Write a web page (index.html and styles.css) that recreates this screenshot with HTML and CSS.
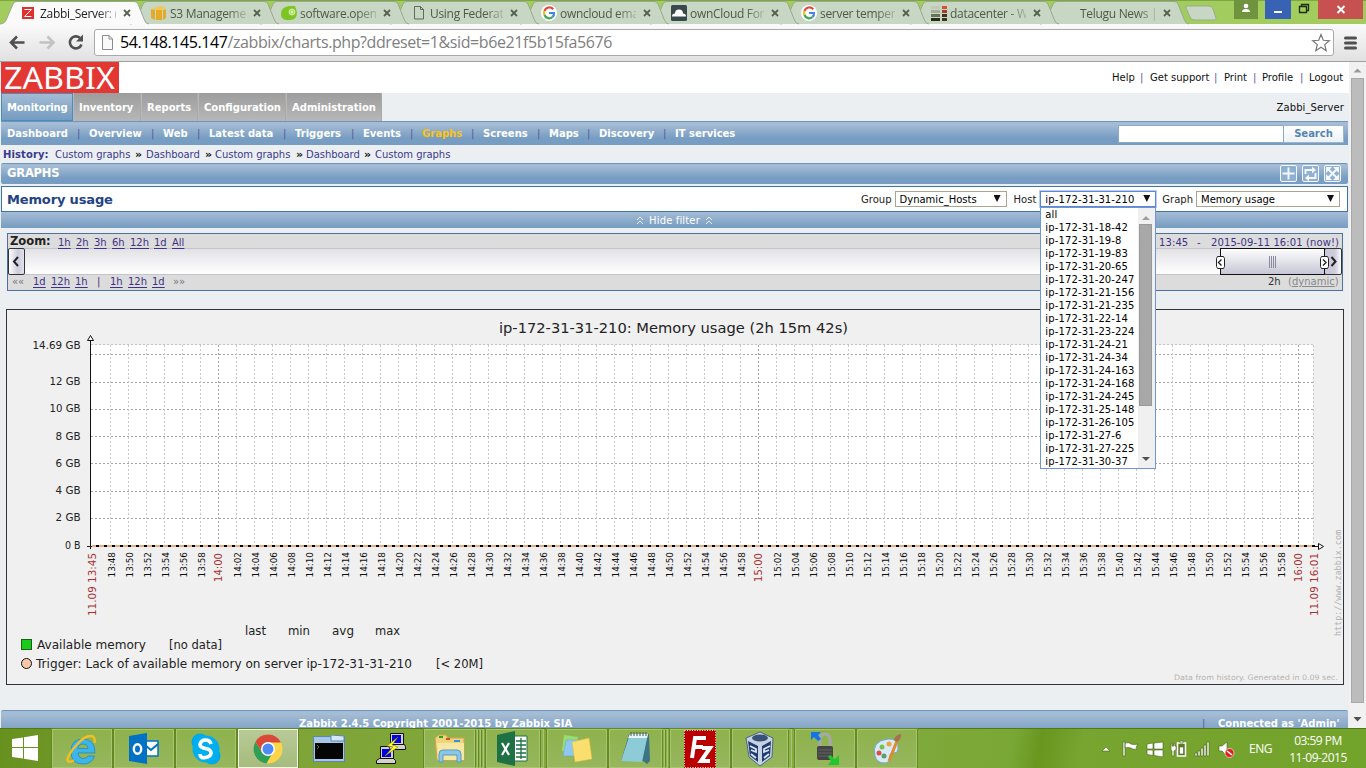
FILE: index.html
```html
<!DOCTYPE html>
<html lang="en">
<head>
<meta charset="utf-8">
<title>Zabbi_Server: Custom graphs</title>
<link rel="stylesheet" href="styles.css">
</head>
<body>
<div class="screen">
  <header class="tabstrip">
    <div class="tabs" id="tabs"></div>
    <svg class="newtab" width="34" height="24"><path d="M3 6H25Q28 6 29 9L32 18Q33 20 30 20H10Q7 20 6 17L2 8Q1 6 3 6Z" fill="#c8d7c3" stroke="#98ad86"/></svg>
    <div class="winbtns">
      <span class="wb user"><svg width="24" height="19"><circle cx="12" cy="6" r="2.3" fill="#fff"/><path d="M8 12Q8 9 12 9T16 12Z" fill="#fff"/></svg></span>
      <span class="wb min"><svg width="26" height="19"><path d="M9 11h8v2H9z" fill="#fff"/></svg></span>
      <span class="wb restore"><svg width="26" height="19"><path d="M8.500 6.500h7v6h-7zM10.500 6V4.500h7v6H16" fill="none" stroke="#1f2b0b" stroke-width="1.300"/></svg></span>
      <span class="wb close"><svg width="45" height="19"><path d="M19.500 6l7 7M26.500 6l-7 7" stroke="#fff" stroke-width="2"/></svg></span>
    </div>
  </header>

  <div class="toolbar">
    <svg class="nav" width="94" height="37" fill="none">
      <path d="M24.500 18.500H12M17 12.500l-6 6 6 6" stroke="#505050" stroke-width="2.600"/>
      <path d="M39.500 18.500H52M47.500 12.500l6 6-6 6" stroke="#c2c2c2" stroke-width="2.600"/>
      <path d="M80 14A6 6 0 1 0 81.500 20.500" stroke="#505050" stroke-width="2.600"/><path d="M83 10.500v7h-7z" fill="#505050"/>
    </svg>
    <div class="omnibox">
      <svg width="13" height="17" fill="#fafafa" stroke="#8c8c8c"><path d="M1.500 1.500H8L11.500 5V15.500H1.500zM8 1.500V5H11.500"/></svg>
      <span class="url"><b>54.148.145.147</b>/zabbix/charts.php?ddreset=1&amp;sid=b6e21f5b15fa5676</span>
      <svg class="star" width="20" height="20"><path d="M10 1.500L12.300 7.300 18.300 7.700 13.700 11.600 15.200 17.700 10 14.300 4.800 17.700 6.300 11.600 1.700 7.700 7.700 7.300Z" fill="#fff" stroke="#777" stroke-width="1.200"/></svg>
    </div>
    <svg class="burger" width="13" height="14"><path d="M1.500 2h10M1.500 7h10M1.500 12h10" stroke="#505050" stroke-width="3" stroke-linecap="round"/></svg>
  </div>

  <div class="viewport">
    <main class="page">
      <div class="brandrow">
        <svg class="logo" width="118" height="31"><rect width="118" height="31" fill="#e33734"/><text x="3" y="26.500" textLength="111" lengthAdjust="spacingAndGlyphs">ZABBIX</text></svg>
        <div class="toplinks"><span>Help</span><i>|</i><span>Get support</span><i>|</i><span>Print</span><i>|</i><span>Profile</span><i>|</i><span>Logout</span></div>
      </div>
      <div class="mainmenu">
        <span class="on">Monitoring</span><span>Inventory</span><span>Reports</span><span>Configuration</span><span>Administration</span>
        <em>Zabbi_Server</em>
      </div>
      <div class="submenu bar">
        <nav><b>Dashboard</b><i>|</i><b>Overview</b><i>|</i><b>Web</b><i>|</i><b>Latest data</b><i>|</i><b>Triggers</b><i>|</i><b>Events</b><i>|</i><b class="cur">Graphs</b><i>|</i><b>Screens</b><i>|</i><b>Maps</b><i>|</i><b>Discovery</b><i>|</i><b>IT services</b></nav>
        <div class="search"><span></span><button>Search</button></div>
      </div>
      <div class="history"><b>History:</b><a>Custom graphs</a><s>»</s><a>Dashboard</a><s>»</s><a>Custom graphs</a><s>»</s><a>Dashboard</a><s>»</s><a>Custom graphs</a></div>
      <div class="titlebar bar">
        <b>GRAPHS</b>
        <svg width="64" height="20" fill="none" stroke="#f4f8fb">
          <g fill="#8fb0d0"><rect x="1.500" y="1.500" width="16" height="16" rx="1.500"/><rect x="23.500" y="1.500" width="16" height="16" rx="1.500"/><rect x="45.500" y="1.500" width="16" height="16" rx="1.500"/></g>
          <path d="M9.500 3.500v12M3.500 9.500h12" stroke-width="2"/>
          <path d="M26.500 10V6H34M36.500 9v5H29" stroke-width="2"/><path d="M33 2.500v7l4-3.500zM30 10.500v7l-4-3.500z" fill="#f4f8fb" stroke="none"/>
          <path d="M49 5l9 9M58 5l-9 9" stroke-width="2"/><path d="M47 3h6l-6 6zM60 3v6l-6-6zM47 16v-6l6 6zM60 16h-6l6-6z" fill="#f4f8fb" stroke="none"/>
        </svg>
      </div>
      <div class="selectrow">
        <h1>Memory usage</h1>
        <label class="grl">Group</label><div class="select grp">Dynamic_Hosts<u></u></div>
        <label class="hl">Host</label>
        <div class="select host">ip-172-31-31-210<u></u>
          <div class="options"><div class="list" id="hosts"></div>
            <div class="optscroll"><svg width="16" height="260"><path d="M4 12l4-4 4 4z" fill="#a0a0a0"/><rect x="1.500" y="16.500" width="12" height="181" fill="#a8a8a8" stroke="#999"/><path d="M4 249h8l-4 4z" fill="#505050"/></svg></div>
          </div>
        </div>
        <label class="gl">Graph</label><div class="select gr">Memory usage<u></u></div>
      </div>
      <div class="filterbar"><svg width="8" height="9"><path d="M1 4l3-3 3 3M1 8l3-3 3 3" fill="none" stroke="#e8eff6"/></svg><span>Hide filter</span><svg width="8" height="9"><path d="M1 4l3-3 3 3M1 8l3-3 3 3" fill="none" stroke="#e8eff6"/></svg></div>

      <div class="timeline">
        <div class="trow up"><b>Zoom:</b><a>1h</a><a>2h</a><a>3h</a><a>6h</a><a>12h</a><a>1d</a><a>All</a><div class="range"><span>13:45</span><span>-</span><span>2015-09-11 16:01 (now!)</span></div></div>
        <div class="track">
          <svg width="17" height="27"><defs><linearGradient id="g1"><stop offset="0" stop-color="#fff"/><stop offset=".6" stop-color="#ccccdc"/><stop offset="1" stop-color="#e4e4ee"/></linearGradient><linearGradient id="g3"><stop offset="0" stop-color="#c8c8da"/><stop offset=".6" stop-color="#ccccdc"/><stop offset="1" stop-color="#fff"/></linearGradient><linearGradient id="g2" x2="0" y2="1"><stop offset="0" stop-color="#fff"/><stop offset="1" stop-color="#c5c5d5"/></linearGradient></defs><rect x=".5" y=".5" width="16" height="26" rx="1.500" fill="url(#g1)" stroke="#333"/><path d="M10 9l-4 4.500 4 4.500" fill="none" stroke="#222" stroke-width="2"/></svg>
          <svg width="126" height="27"><rect x="108.500" y=".5" width="17" height="26" rx="1.500" fill="url(#g3)" stroke="#333"/><path d="M115.500 9l4 4.500-4 4.500" fill="none" stroke="#222" stroke-width="2"/><rect x="4.500" y=".5" width="104" height="26" fill="url(#g2)" stroke="#111"/><path d="M53.500 8v12M55.500 8v12M57.500 8v12M59.500 8v12" stroke="#8a8a9c"/><g fill="#fff" stroke="#222"><path d="M1.500 8.500h6l1 2v8l-1 2h-6l-1-2v-8z"/><path d="M105.500 8.500h6l1 2v8l-1 2h-6l-1-2v-8z"/></g><path d="M5.500 11.500l-3 3 3 3M107 11.500l3 3-3 3" fill="none" stroke="#222" stroke-width="1.400"/></svg>
        </div>
        <div class="trow down"><s>««</s><a>1d</a><a>12h</a><a>1h</a><i>|</i><a>1h</a><a>12h</a><a>1d</a><s>»»</s><div class="period"><span>2h</span><span>(<u>dynamic</u>)</span></div></div>
      </div>

      <svg class="chart" id="chart" width="1338" height="376" viewBox="6 309 1338 376"></svg>

      <footer class="bar foot"><b>Zabbix 2.4.5 Copyright 2001-2015 by Zabbix SIA</b><i>|</i><b class="conn">Connected as 'Admin'</b></footer>
    </main>
    <aside class="pagescroll"><svg width="17" height="667"><path d="M4.500 10.500l4-4 4 4z" fill="#999"/><rect x="2.500" y="16.500" width="12" height="624" fill="#bcbcbc" stroke="#a8a8a8"/><path d="M4.500 655h8l-4 4.500z" fill="#505050"/></svg></aside>
  </div>

  <footer class="taskbar">
    <svg class="winlogo" width="27" height="27" fill="#fff"><path d="M0 4l11-1.500V12H0zM12 2.300L26 0v12H12zM0 13h11v10.500L0 22zM12 13h14v13l-14-2.200z"/></svg>
    <div class="app a1"><svg width="32" height="32"><path fill-rule="evenodd" d="M29 20H12q1 5.500 5.500 5.500 3 0 4.500-2.500h6.500Q26 31 17 31 5 31 5 18.500 5 6 17 6q12 0 12 14zM12 15.500h10q-.5-4.500-5-4.500t-5 4.500z" fill="#3cb5ea" stroke="#1c83c0" stroke-width=".7"/><path d="M28.500 10q1-7-4-7-6 0-13 8Q3 20 1.500 26q-.5 4.500 6.500 1.500" fill="none" stroke="#f5bf20" stroke-width="2.400"/></svg></div>
    <div class="app a2"><svg width="32" height="32"><path d="M15 8h15v15H15z" fill="#fff" stroke="#0071c5" stroke-width="1.500"/><path d="M17 12l6 5 7-6" fill="none" stroke="#0071c5" stroke-width="2"/><path d="M1 3l18-3v31L1 28z" fill="#0071c5"/><ellipse cx="9.500" cy="16" rx="3.700" ry="4.700" fill="none" stroke="#fff" stroke-width="2.400"/></svg></div>
    <div class="app a3"><svg width="32" height="32"><circle cx="10" cy="9" r="8.500" fill="#00a9e8"/><circle cx="22" cy="23" r="8.500" fill="#00a9e8"/><circle cx="16" cy="16" r="13.500" fill="#00aff0"/><path d="M21 11q-1-4-5.500-4T10 11.500q0 3 5.500 4t5.500 4.500-5.500 4.500T10 21" fill="none" stroke="#fff" stroke-width="3.600"/></svg></div>
    <div class="app a4"><svg width="32" height="32"><circle cx="16" cy="16" r="14.500" fill="#fcd54a"/><path d="M3.500 8.700A14.500 14.500 0 0 0 14.500 30.500L21 19H10z" fill="#2f9e58"/><path d="M3.500 8.700A14.500 14.500 0 0 1 29 9.500H15L10 19z" fill="#d9493a"/><circle cx="16" cy="16" r="7" fill="#fff"/><circle cx="16" cy="16" r="5.500" fill="#4c8bf5"/></svg></div>
    <div class="icon cmd"><svg width="32" height="27"><rect x=".5" y="1.500" width="31" height="25" fill="#a6c7e8" stroke="#5c86ad"/><path d="M18 0v6h13V1z" fill="#d5e8fa" stroke="#5c86ad"/><path d="M2 8h28v16H2z" fill="#050505"/><path d="M4 10l2 2-2 2" fill="none" stroke="#3b7a3b"/></svg></div>
    <div class="icon putty"><svg width="33" height="33" stroke="#111"><path d="M15.500 1.500h13v11h-13zM13.500 14.500l3-2h13l1 2v3h-15zM5.500 14.500h13v12h-13zM1.500 28.500l3-2h14l2 2v3h-19z" fill="#d5d2ca"/><path d="M17 3h9v8h-9zM7 17h9v8H7z" fill="#0000e0" stroke="none"/><path d="M23 5L12 14l6 1-8 9 13-9-6-2z" fill="#ffff30" stroke="#8a8500" stroke-width=".6"/></svg></div>
    <div class="app a5"><svg width="32" height="32"><path d="M1 5l4-3h7l2 3h16v22H3z" fill="#efd47a" stroke="#c9a748"/><path d="M3 10h27v17H4z" fill="#f8e6a3"/><path d="M5 4h4" stroke="#29a329" stroke-width="2"/><path d="M12 6h4" stroke="#db4830" stroke-width="2"/><path d="M20 8h6" stroke="#3b8ee0" stroke-width="2"/><path d="M5 29v-8q0-4 4-4h14q4 0 4 4v8h-4v-7H9v7z" fill="#8bc6e6" stroke="#579cc4"/></svg></div><i class="stack s2"></i><i class="stack s2"></i><i class="stack s2"></i>
    <div class="app a6"><svg width="32" height="36"><path d="M17 5h13v25H17z" fill="#fff" stroke="#1e7145"/><path d="M19 10h10M19 14h10M19 18h10M19 22h10M19 26h10M24 7v21" stroke="#1e7145" stroke-width="1.300"/><path d="M0 4l18-4v35L0 31z" fill="#1e7145"/><path d="M5 12l7 12M12 12l-7 12" stroke="#fff" stroke-width="2.200"/></svg></div><i class="stack s1"></i>
    <div class="app a7"><svg width="32" height="30"><path d="M3 1l14 2-3 17L1 17z" fill="#9bdc72"/><path d="M5 6h15v16H2z" fill="#8fc8ee" stroke="#64a4cc" stroke-width=".5"/><path d="M11 8l17-4 3 21-17 3z" fill="#fbdf6e" stroke="#dfb936" stroke-width=".5"/></svg></div>
    <div class="app a8"><svg width="30" height="35"><path d="M8 3h20l1 27-3 3-4-3H0z" fill="#3d7482"/><path d="M9 3h18l-6 28L0 30z" fill="#8dcbd7"/><path d="M9 3h18l-1 4H7z" fill="#e8f3f4"/><path d="M10 1v4M13 1v4M16 1v4M19 1v4M22 1v4M25 1v4" stroke="#456"/></svg></div><i class="stack s2"></i><i class="stack s2"></i>
    <div class="app a9"><svg width="32" height="38"><rect width="32" height="38" fill="#b90000"/><rect x=".5" y=".5" width="31" height="37" fill="none" stroke="#fff" stroke-dasharray="1 1.500"/><path d="M8 28L11 8H22M10 17h9M18 18h8L17 31h9" fill="none" stroke="#fff" stroke-width="4"/></svg></div>
    <div class="app a10"><svg width="30" height="36"><path d="M15 1l13 6-1 19-12 9L4 26 1 7z" fill="#c6d3e2" stroke="#50647f"/><path d="M3 10l10 5v16L5 25zM17 15l9-5-1 15-8 6z" fill="#213d70"/><path d="M5 15l6 3v3l-5-2M6 23l5 4M25 15l-6 3v3l5-2M24 23l-5 4" fill="none" stroke="#dbe8f6" stroke-width="1.800"/><ellipse cx="15" cy="7" rx="8" ry="3.500" fill="#395177"/></svg></div><i class="stack s1"></i>
    <div class="app a11"><svg width="32" height="38"><path d="M11 17V10q0-6 5-6t5 6v7" fill="none" stroke="#a8a8a8" stroke-width="3"/><rect x="8" y="16" width="16" height="14" rx="2" fill="#444"/><path d="M9 20h14M9 23h14M9 26h14" stroke="#626262"/><path d="M2 2h10l-3 3 3 4-3 2-4-4-3 3z" fill="#1473e8"/><path d="M30 35H19l3-4-3-4 2-2 5 4 4-4z" fill="#22c52b"/></svg></div>
    <div class="app a12"><svg width="34" height="36"><path d="M5 25Q1 10 18 8q11-1 10 10 0 4-4 4-5-1-4 5 0 5-6 5Q7 32 5 25z" fill="#d6ebf7" stroke="#6da7cf"/><circle cx="9" cy="22" r="2.500" fill="#e34a42"/><circle cx="12" cy="16" r="2.500" fill="#7bc149"/><circle cx="19" cy="13" r="2.500" fill="#f0a23b"/><circle cx="14" cy="25" r="2.500" fill="#5f9c68"/><path d="M27 10L19 30" stroke="#e18a2b" stroke-width="3"/><path d="M24 9q1-5 7-6 1 4-4 8z" fill="#a86f4e"/></svg></div>
    <div class="tray">
      <svg width="140" height="24" fill="#fff" stroke="#46631a" stroke-width=".6"><path d="M4 14l4-4 4 4z"/><path d="M25 5v14h2V5zM27 6q4-1 6 1 3 1 7 0l-2 3 1 2q-4 1-6-1-3-1-6 0z"/><path d="M49 7l6-1v6h-6zM56 6l9-1v7h-9zM49 13h6v5.500l-6-1zM56 13h9v7l-9-1.500z"/><path d="M79.500 6h8v13h-8z" fill="#5d7c27" stroke="#fff" stroke-width="1.500"/><path d="M82 4h3v2h-3zM81.500 10h4v7h-4zM73 6h1v3h2V6h1v3h1v4l-2 1v5h-2v-5l-1-1V9z"/><path d="M97 16h2v3h-2zM100 14h2v5h-2zM103 11h2v8h-2zM106 8h2v11h-2zM109 5h2v14h-2z"/><path d="M121 9h3l5-4v14l-5-5h-3z"/><circle cx="131.500" cy="16" r="4.500" fill="#e32020" stroke="#fff"/><path d="M129 14l5 4" stroke="#fff" stroke-width="1.600"/></svg>
      <span class="lang">ENG</span>
      <span class="clock"><span>03:59 PM</span><span>11-09-2015</span></span>
    </div>
  </footer>
</div>
<script src="script.js"></script>
</body>
</html>
```
FILE: styles.css
```css
*{box-sizing:border-box}
body{margin:0;overflow:hidden;font-family:"DejaVu Sans",sans-serif;font-size:10px;color:#111}
i,em{font-style:normal}s{text-decoration:none}
svg{display:block;flex:none}
.screen{width:1366px;height:768px;display:flex;flex-direction:column}
.tabstrip{height:24px;flex:none;background:linear-gradient(#7ea744 0 1px,#a2cc5e 1px);display:flex;position:relative}
.tabs{display:flex;width:1184px}
.tab{width:130px;height:24px;flex:none;position:relative;font:12px "Open Sans",sans-serif;color:#4d5a47}
.tab>.shape{position:absolute;left:0;top:0;overflow:visible}
.tabin{position:relative;display:flex;align-items:center;padding-left:21px;height:26px}
.tab .label{width:79px;padding-left:3px;white-space:nowrap;letter-spacing:-.3px;-webkit-mask:linear-gradient(90deg,#000 76%,rgba(0,0,0,.25))}
.tab.active{color:#222}
.tab .x{margin-left:3px}
.winbtns{display:flex;margin-left:16px}
.wb{height:19px}.user{width:24px;background:#709340;margin-right:7px}.min{width:26px;background:#3863b4}.restore{width:27px}.close{width:45px;background:#c75050}
.toolbar{height:38px;flex:none;background:linear-gradient(#fafafa,#e1e1e1);border-bottom:1px solid #a0a0a0;display:flex;align-items:center}
.omnibox{width:1240px;height:27px;border:1px solid #a9a9a9;border-radius:3px;background:#fff;display:flex;align-items:center;padding:0 2px 0 6px}
.url{font:16px/24px "Open Sans",sans-serif;color:#808080;margin:-1px 0 0 6px;letter-spacing:-.41px;white-space:nowrap}
.url b{font-weight:400;color:#000}
.star{margin-left:auto}.burger{margin-left:10px}
.viewport{height:666px;flex:none;display:flex;overflow:hidden;background:#ebeff2}
.page{width:1349px;display:flex;flex-direction:column;padding-left:1px}
.pagescroll{width:17px;background:#f1f1f1}
.brandrow{height:31px;flex:none;background:#fff;display:flex;justify-content:space-between;align-items:center}
.logo text{font:30px "Noto Sans",sans-serif;fill:#fff}
.toplinks{display:grid;grid-template-columns:28px 10px 64px 10px 29px 9px 38px 9px 35px;padding-right:5px;white-space:nowrap}
.toplinks i,.submenu i,.foot i{color:#555a9c}
.mainmenu{height:28px;flex:none;display:flex;font-weight:700;color:#fff}
.mainmenu span{height:28px;background:linear-gradient(#9d9d9d,#b7b7b7);border-right:1px solid #a9a9a9;border-left:1px solid #b8b8b8;line-height:29px;padding-left:5px;width:57px;white-space:nowrap}
.mainmenu span:nth-child(2){width:68px}.mainmenu span:nth-child(4){width:88px}.mainmenu span:nth-child(5){width:96px}
.mainmenu .on{width:72px;background:linear-gradient(#a2bbd5,#759cc1);border:1px solid #4a8abc;padding-left:5px;line-height:27px;letter-spacing:-.1px}
.mainmenu em{margin-left:auto;padding-right:5px;color:#111;font-weight:400;line-height:29px;letter-spacing:.1px}
.bar{background:linear-gradient(#a5bcd5 10%,#779dc2 70%);border-top:1px solid #6d96bb;color:#fff}
.submenu{height:24px;flex:none;width:1347px;display:flex;justify-content:space-between;line-height:23px}
.submenu nav{display:grid;grid-template-columns:70px 12px 62px 12px 34px 12px 74px 12px 56px 12px 47px 12px 49px 12px 54px 12px 38px 12px 64px 12px 70px;padding-left:6px;white-space:nowrap}
.submenu .cur{color:#ffc20c}
.search{display:flex;padding:3px 4px 0 0}
.search span{width:166px;height:18px;background:#fff;border:1px solid #8baaca}
.search button{width:60px;height:18px;border:1px solid #9cb5d0;border-left:0;background:linear-gradient(#fff,#edf2f7);font:bold 10px/14px "DejaVu Sans";color:#5584b2;padding:0}
.history{height:18px;flex:none;display:grid;grid-template-columns:52px 79px 12px 58px 11px 80px 11px 57px 12px 80px;line-height:19px;padding-left:2px;color:#3a3a8c;white-space:nowrap;letter-spacing:-.05px}
.history s{color:#111;font-size:11px;font-weight:700;padding-left:1px}
.history b{letter-spacing:.1px}
.titlebar{height:21px;flex:none;width:1347px;display:flex;justify-content:space-between;padding-left:6px;line-height:19px;font-size:11.500px;border-radius:2px;padding-right:5px;letter-spacing:-.2px}
.selectrow{height:26px;flex:none;width:1347px;margin-top:2px;border:1px solid #3d73a5;background:#fff;display:flex;align-items:center;padding-right:7px;position:relative}
h1{font-size:13px;color:#244385;margin:0 auto 0 5px;letter-spacing:-.15px}
label{margin-right:4px;color:#222}.grl{margin-right:3px}.hl{margin-left:7px}.gl{margin-left:6px;margin-right:3px}
.select{height:16px;border:1px solid #aaa590;line-height:15px;padding-left:4px;display:flex;justify-content:space-between;white-space:nowrap;position:relative;background:#fff;color:#000}
.select>u{width:7px;height:7px;background:#111;clip-path:polygon(0 0,100% 0,50% 100%);margin:3px 5px 0 0}
.grp{width:112px}.host{width:116px;border-color:#5b87d8;outline:1px solid #b8cdf2;letter-spacing:.13px}.gr{width:144px}
.options{position:absolute;left:-1px;top:15px;width:116px;height:262px;border:1px solid #7195d0;background:#fff;display:flex;z-index:5;line-height:13px}
.list{width:97px;padding-left:4px}
.list div{height:13px}
.optscroll{width:17px;background:#f0f0f0}
.filterbar{height:16px;flex:none;width:1347px;background:linear-gradient(#a5bcd5,#769cc1);color:#fff;display:flex;justify-content:center;align-items:center;gap:5px}
.filterbar span{letter-spacing:.15px}
.timeline{height:58px;flex:none;width:1336px;margin:5px 0 0 6px;border:1px solid #4d70ab;background:#dcdcdc;color:#3e3286}
.trow{display:grid;position:relative;white-space:nowrap}
.trow a{text-decoration:underline;text-underline-offset:2px}
.up{height:14px;line-height:17px;grid-template-columns:48px 18px 18px 18px 18px 24px 18px 20px 1fr;padding-left:2px}
.up b{font-size:11.500px;color:#222;line-height:15px}
.down{height:15px;line-height:13px;grid-template-columns:21px 18px 24px 22px 13px 18px 24px 21px 20px 1fr;padding-left:4px}
.down s{color:#777}
.range,.period{justify-self:end;display:grid}
.range{grid-template-columns:38px 14px 129px;padding-right:2px;letter-spacing:.1px;line-height:18px}
.period{grid-template-columns:20px 52px;padding-right:2px;color:#333;line-height:14px}
.period span:last-child{color:#888}
.track{height:27px;display:flex;justify-content:space-between;background:linear-gradient(#c4c4cc 0 1px,#e2e2e6 1px,#fff 26px,#c4c4cc 26px)}
.chart{margin:18px 0 0 5px}
.chart text{fill:#222;font-size:10.500px}
.foot{height:32px;flex:none;width:1347px;margin-top:25px;display:flex;line-height:26px;padding-left:298px;border-radius:2px}
.foot i{margin-left:auto;width:16px}.conn{width:130px;white-space:nowrap}
.taskbar{height:40px;flex:none;background:linear-gradient(100deg,#67911f 0,#7da337 15%,#86ab40 60%,#79a735 74%,#68961e 76%,#78a430 79%,#72a32b 100%);border-top:1px solid #517717;display:flex;align-items:center;color:#fff}
.winlogo{margin:0 13px 0 12px}
.app{width:60px;height:39px;border:1px solid #a9c572;outline:1px solid #638924;outline-offset:0;background:linear-gradient(#8eb24d,#97b65d);display:flex;align-items:center;justify-content:center;margin-right:2px;flex:none}
.a4{background:linear-gradient(#b8ca98,#a5bb7b);border-color:#f0f5e7}
.icon{width:32px;flex:none}.cmd{margin:0 30px 0 13px}.putty{margin-right:17px}
.a5{width:51px;margin-right:0}.app.a6{width:54px;margin-right:0}.a8{width:53px;margin-right:0}.a10{width:56px;margin-right:0}
.stack{height:39px;border:1px solid #a9c572;border-left:1px solid #638924;background:#8eb24d;flex:none}
.s1{width:4px;margin-right:3px}.s2{width:3px}.s2+.app{margin-left:2px}
.tray{margin-left:auto;display:flex;align-items:center;width:268px;font:12px "Open Sans",sans-serif;letter-spacing:-.5px}
.lang{width:24px;margin-left:11px}.clock{margin-left:14px;width:62px;text-align:center;display:flex;flex-direction:column;line-height:17px;white-space:nowrap}
```
FILE: script.js
```js
// Browser tabs
var G = '<circle cx="8" cy="8" r="8" fill="#fff"/><g fill="none" stroke-width="2.2"><path d="M12.200 4.300A5 5 0 0 0 3.500 6" stroke="#e04a3c"/><path d="M3.500 6a5 5 0 0 0 0 4" stroke="#f3b920"/><path d="M3.500 10a5 5 0 0 0 8 2" stroke="#3fa856"/><path d="M11.500 12A5 5 0 0 0 13 8H8" stroke="#4684ec"/></g>';
var tabs = [
  ['Zabbi_Server: (', '<rect x="1" y="2" width="12" height="12" fill="#e02f2f"/><path d="M3.500 4.500h7l-7 7h7" fill="none" stroke="#fff"/>'],
  ['S3 Manageme', '<path d="M1 4l4-2 5-1 5 2-5 2-5 0z" fill="#f3c757"/><path d="M0 4l4 1v10l-4-2zM5 5h6v10H5zM12 5l3-1v9l-3 2z" fill="#e3ab28"/>'],
  ['software.open', '<path d="M0 9Q0 2 8 1h6l2 6q0 8-7 8-9 1-9-6z" fill="#7cc522"/><circle cx="11" cy="7" r="3" fill="#a9e05a" stroke="#fff" stroke-width=".6"/><circle cx="11" cy="7" r="1" fill="#fff"/>'],
  ['Using Federat', '<path d="M3.500 1.500h6l3 3v9.500h-9zM9.500 1.500v3h3" fill="none" stroke="#5d6b57"/>'],
  ['owncloud ema', G],
  ['ownCloud For', '<rect width="16" height="16" rx="1.500" fill="#37494a"/><path d="M1 11.500q0-3 3-3 0-4 4-4t4 4q3 0 3 3z" fill="#fff"/>'],
  ['server temper', G],
  ['datacenter - W', '<path d="M0 1h9v3H0z" fill="#c2c9b8"/><path d="M0 5h9v3H0z" fill="#a7ad94"/><path d="M0 9h9v3H0z" fill="#6b7357"/><path d="M0 13h9v3H0z" fill="#252d14"/><path d="M11 1h5v3h-5z" fill="#e04a36"/><path d="M11 5h5v3h-5z" fill="#a23e2b"/><path d="M11 9h5v3h-5zM11 13h5v3h-5z" fill="#3e3219"/>'],
  ['Telugu News |', '']
];
document.getElementById('tabs').innerHTML = tabs.map(function (t, i) {
  var on = i === 0;
  return '<div class="tab' + (on ? ' active' : '') + '" style="z-index:' + (20 - i) + '">' +
    '<svg class="shape" width="147" height="24"><path d="M0 24Q5 24 7 18L13 4Q14 1.500 17 1.500H134Q137 1.500 138 4L144 19Q145.500 24 149 24" fill="' + (on ? '#fafafa' : '#c8d7c3') + '" stroke="#98a98f"/></svg>' +
    '<div class="tabin"><svg width="16" height="16">' + t[1] + '</svg><span class="label">' + t[0] + '</span>' +
    '<svg class="x" width="16" height="16"><path d="M5 5l6 6M11 5l-6 6" stroke="#566150" stroke-width="1.800"/></svg></div></div>';
}).join('');

// Host drop-down
document.getElementById('hosts').innerHTML =
  ['all'].concat('18-42 19-8 19-83 20-65 20-247 21-156 21-235 22-14 23-224 24-21 24-34 24-163 24-168 24-245 25-148 26-105 27-6 27-225 30-37'.split(' ').map(function (h) { return 'ip-172-31-' + h; }))
  .map(function (h) { return '<div>' + h + '</div>'; }).join('');

// Memory usage graph
var s = '';
function line(x1, y1, x2, y2, c, extra) { s += '<path d="M' + x1 + ' ' + y1 + 'L' + x2 + ' ' + y2 + '" stroke="' + c + '" ' + (extra || '') + '/>'; }
function text(x, y, t, len, size, fill, extra) { s += '<text x="' + x + '" y="' + y + '" textLength="' + len + '" lengthAdjust="spacingAndGlyphs" style="font-size:' + size + 'px;fill:' + (fill || '#222') + '" ' + (extra || '') + '>' + t + '</text>'; }
function vtext(x, y, t, len, size, fill, extra) { text(x, y, t, len, size, fill, 'transform="rotate(-90 ' + x + ' ' + y + ')" ' + (extra || '')); }
s += '<rect x="6.500" y="309.500" width="1337" height="375" fill="#f0f0f0" stroke="#333"/><rect x="91" y="345" width="1222" height="201" fill="#fff"/>';
line(91, 344.5, 1314, 344.5, '#c4c4c4', 'stroke-dasharray="2 2"');
[354.5, 382.5, 409.5, 436.5, 463.5, 491.5, 518.5].forEach(function (y) { line(91, y, 1314, y, '#a4a4a4', 'stroke-dasharray="2 2"'); });
for (var m = -12; m <= 120; m += 2) {
  var x = 218 + m * 9, hour = m % 60 === 0, abs = 14 * 60 + m;
  line(x + 0.5, 345, x + 0.5, 546, hour ? '#a0a0a0' : '#c8c8c8', 'stroke-dasharray="2 2"');
  var lab = Math.floor(abs / 60) + ':' + ('0' + abs % 60).slice(-2);
  if (hour) vtext(x + 4, 582, lab, 29, 10.5, '#a83232');
  else vtext(x + 4.5, 577.5, lab, 25.5, 9, '#111');
}
line(1313.5, 345, 1313.5, 546, '#c8c8c8', 'stroke-dasharray="2 2"');
line(90.5, 341, 90.5, 549, '#111');
line(87, 546.5, 1319, 546.5, '#222');
line(92, 546, 1313, 546, '#e6ad82', 'stroke-width="2"');
line(96, 546, 1316, 546, '#000', 'stroke-width="2" stroke-dasharray="3 5"');
s += '<path d="M87.500 340.500h6l-3-5zM1318.500 543.500v6l5-3z" fill="#fff" stroke="#111"/>';
[['14.69 GB', 349, 48], ['12 GB', 385, 31], ['10 GB', 412, 31], ['8 GB', 440, 25], ['6 GB', 467, 25], ['4 GB', 494, 25], ['2 GB', 521, 25], ['0 B', 549, 15.5]].forEach(function (a) { text(80.5 - a[2], a[1], a[0], a[2], 10.8); });
vtext(96, 616, '11.09 13:45', 63, 10.5, '#a83232');
vtext(1318, 616, '11.09 16:01', 63, 10.5, '#a83232');
text(499, 333, 'ip-172-31-31-210: Memory usage (2h 15m 42s)', 349, 14);
text(245, 635, 'last', 21, 12); text(288, 635, 'min', 22, 12); text(332, 635, 'avg', 22, 12); text(375, 635, 'max', 25, 12);
s += '<rect x="21.500" y="639.500" width="10" height="10" fill="#1bcb1b" stroke="#176117"/><circle cx="26.500" cy="663.500" r="5" fill="#fac8a6" stroke="#111"/>';
text(37, 649, 'Available memory', 109, 12); text(169, 649, '[no data]', 53, 12);
text(36, 668, 'Trigger: Lack of available memory on server ip-172-31-31-210', 376, 12); text(436, 668, '[&lt; 20M]', 47, 12);
text(1174, 680, 'Data from history. Generated in 0.09 sec.', 164, 7.5, '#b4b4b4');
vtext(1341, 636, 'http://www.zabbix.com', 106, 8.5, '#b0b0b0', 'font-family="DejaVu Sans Mono, monospace"');
document.getElementById('chart').innerHTML = s;
```
